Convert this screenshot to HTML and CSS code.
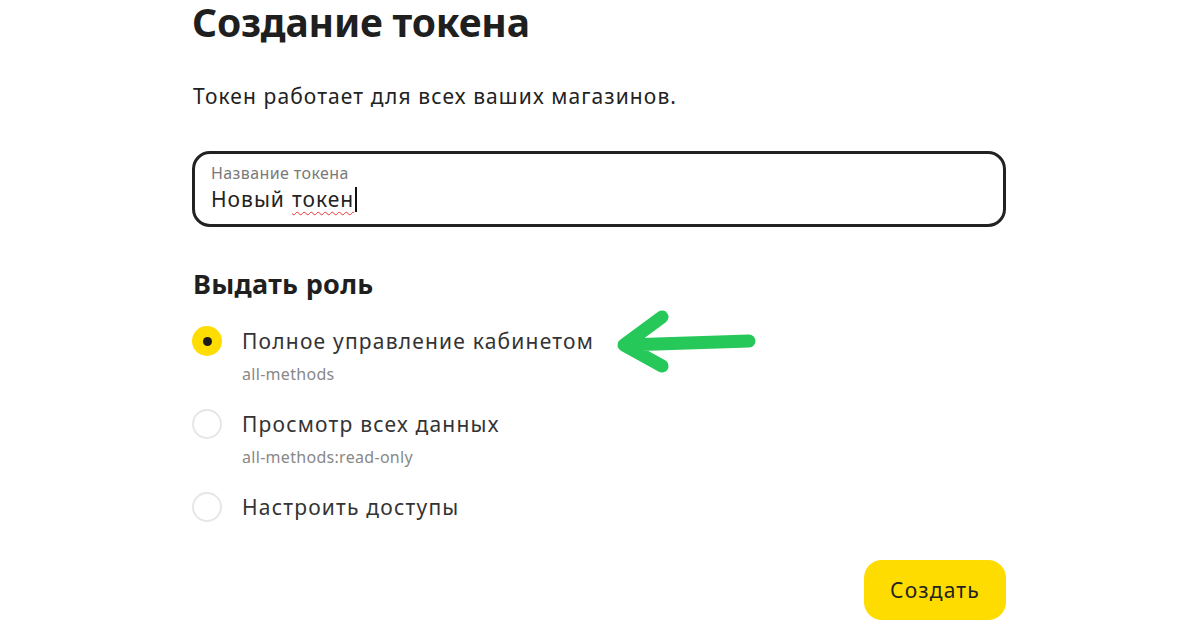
FILE: index.html
```html
<!DOCTYPE html>
<html lang="ru">
<head>
<meta charset="utf-8">
<link rel="stylesheet" href="styles.css">
</head>
<body>
<main class="page">
  <h1 class="title">Создание токена</h1>
  <p class="lead">Токен работает для всех ваших магазинов.</p>
  <div class="field">
    <div class="field-label">Название токена</div>
    <div class="field-value">Новый <span class="spell">токен</span><span class="caret"></span></div>
  </div>
  <h2 class="subtitle">Выдать роль</h2>
  <div class="roles">
    <div class="role">
      <span class="radio radio-on"><span class="dot"></span></span>
      <div class="role-text">
        <div class="role-name">Полное управление кабинетом</div>
        <div class="role-code">all-methods</div>
      </div>
      <svg class="arrow" width="160" height="80" viewBox="0 0 160 80">
        <path d="M22 45 L145 41 M58 17 L20 45 L58 66" fill="none" stroke="#26c85a" stroke-width="13" stroke-linecap="round" stroke-linejoin="round"/>
      </svg>
    </div>
    <div class="role">
      <span class="radio"></span>
      <div class="role-text">
        <div class="role-name">Просмотр всех данных</div>
        <div class="role-code">all-methods:read-only</div>
      </div>
    </div>
    <div class="role">
      <span class="radio"></span>
      <div class="role-text">
        <div class="role-name">Настроить доступы</div>
      </div>
    </div>
  </div>
  <div class="actions">
    <button class="btn">Создать</button>
  </div>
</main>
</body>
</html>
```

FILE: styles.css
```css
html, body {
  margin: 0;
  padding: 0;
  background: #fff;
}
body {
  font-family: "Noto Sans", "Open Sans", sans-serif;
  color: #222;
  width: 1200px;
  height: 628px;
  overflow: hidden;
}
.page {
  margin-left: 192px;
  width: 814px;
}
.title {
  margin: 0;
  font-size: 39px;
  line-height: 44px;
  font-weight: 700;
  letter-spacing: -0.2px;
  color: #1f1f1f;
}
.lead {
  margin: 38px 0 0 1px;
  font-size: 21px;
  line-height: 28px;
  letter-spacing: 1.1px;
  color: #222;
}
.field {
  margin-top: 41px;
  border: 3px solid #222;
  border-radius: 18px;
  padding: 9px 0 0 16px;
  height: 61px;
}
.field-label {
  font-size: 16px;
  line-height: 20px;
  letter-spacing: 0.4px;
  color: #7a7a7a;
}
.field-value {
  margin-top: 2px;
  font-size: 21px;
  line-height: 28px;
  letter-spacing: 1px;
  color: #222;
  display: flex;
  align-items: center;
}
.spell {
  margin-left: 7px;
  text-decoration: underline wavy #e33;
  text-decoration-thickness: 1px;
  text-underline-offset: 4px;
}
.caret {
  display: inline-block;
  width: 1.5px;
  height: 25px;
  background: #111;
  margin-left: 1px;
}
.subtitle {
  margin: 40px 0 0 1px;
  font-size: 27px;
  line-height: 34px;
  font-weight: 700;
  letter-spacing: 0.3px;
  color: #1f1f1f;
}
.roles {
  margin-top: 25px;
  display: flex;
  flex-direction: column;
  gap: 26px;
}
.role {
  display: flex;
  align-items: flex-start;
  position: relative;
}
.radio {
  width: 26px;
  height: 26px;
  border: 2px solid #e6e6e6;
  border-radius: 50%;
  display: flex;
  align-items: center;
  justify-content: center;
  flex: none;
}
.radio-on {
  background: #ffdd00;
  border-color: #ffdd00;
}
.dot {
  width: 9px;
  height: 9px;
  border-radius: 50%;
  background: #1a1a1a;
}
.role-text {
  margin-left: 20px;
}
.role-name {
  font-size: 21px;
  line-height: 30px;
  letter-spacing: 1.2px;
  color: #333;
}
.role-code {
  margin-top: 9px;
  font-size: 16px;
  line-height: 18px;
  letter-spacing: 0.3px;
  color: #888;
}
.arrow {
  position: absolute;
  left: 412px;
  top: -26px;
}
.actions {
  display: flex;
  justify-content: flex-end;
  margin-top: 38px;
}
.btn {
  background: #ffdc00;
  border: none;
  border-radius: 18px;
  width: 142px;
  height: 60px;
  font-family: inherit;
  font-size: 21px;
  letter-spacing: 1.2px;
  color: #222;
  padding: 0;
}
```
